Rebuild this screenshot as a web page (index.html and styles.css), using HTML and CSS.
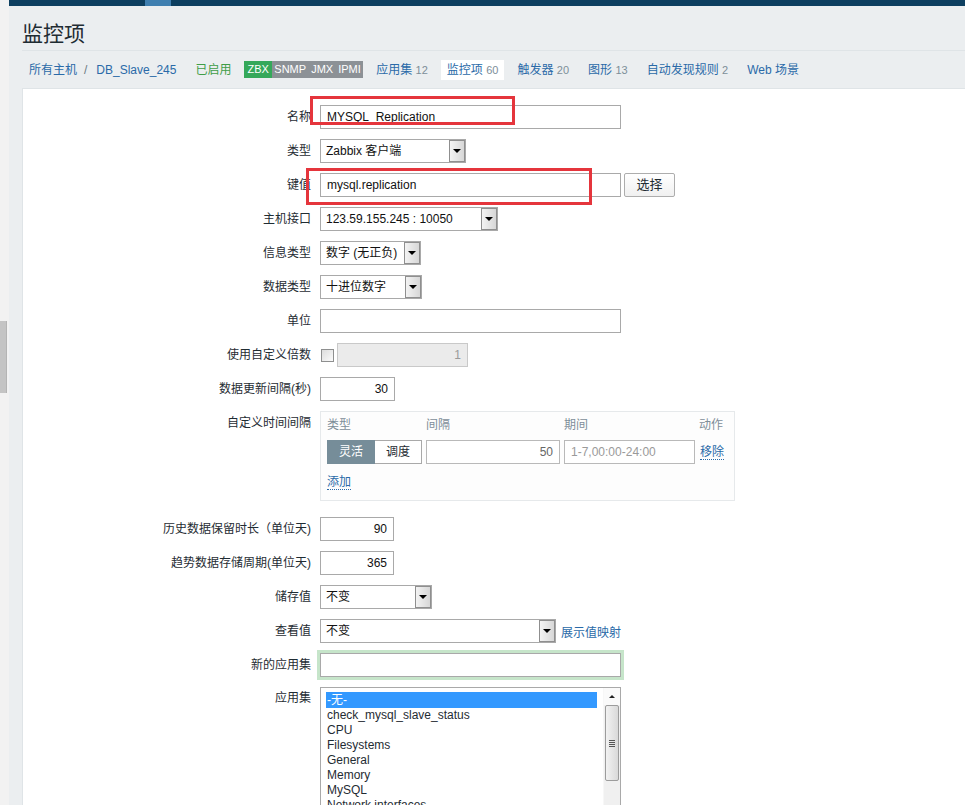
FILE: index.html
```html
<!DOCTYPE html>
<html lang="zh-CN">
<head>
<meta charset="utf-8">
<title>监控项</title>
<link rel="stylesheet" href="styles.css">
</head>
<body>
<div class="page">
  <div class="vscroll"><div class="vthumb"></div></div>
  <div class="main">
    <div class="topnav"><span class="topnav-active"></span></div>
    <header class="hdr">
      <h1 class="title">监控项</h1>
      <ul class="hostnav">
        <li><a class="lnk">所有主机</a><span class="sep">/</span><a class="lnk">DB_Slave_245</a></li>
        <li class="ok">已启用</li>
        <li class="tags"><span class="tag tag-on">ZBX</span><span class="tag">SNMP</span><span class="tag">JMX</span><span class="tag">IPMI</span></li>
        <li><a class="lnk">应用集</a> <span class="cnt">12</span></li>
        <li class="cur"><a class="lnk">监控项</a> <span class="cnt">60</span></li>
        <li><a class="lnk">触发器</a> <span class="cnt">20</span></li>
        <li><a class="lnk">图形</a> <span class="cnt">13</span></li>
        <li><a class="lnk">自动发现规则</a> <span class="cnt">2</span></li>
        <li><a class="lnk">Web 场景</a></li>
      </ul>
    </header>
    <div class="form">
      <div class="grid">
        <div class="lbl">名称</div>
        <div class="fld"><div class="inp w301">MYSQL_Replication</div></div>

        <div class="lbl">类型</div>
        <div class="fld"><div class="sel w146"><span class="sel-txt">Zabbix 客户端</span><span class="sel-btn"></span></div></div>

        <div class="lbl">键值</div>
        <div class="fld"><div class="inp w301">mysql.replication</div><div class="btn">选择</div></div>

        <div class="lbl">主机接口</div>
        <div class="fld"><div class="sel w178"><span class="sel-txt">123.59.155.245 : 10050</span><span class="sel-btn"></span></div></div>

        <div class="lbl">信息类型</div>
        <div class="fld"><div class="sel w101"><span class="sel-txt">数字 (无正负)</span><span class="sel-btn"></span></div></div>

        <div class="lbl">数据类型</div>
        <div class="fld"><div class="sel w102"><span class="sel-txt">十进位数字</span><span class="sel-btn"></span></div></div>

        <div class="lbl">单位</div>
        <div class="fld"><div class="inp w301"></div></div>

        <div class="lbl">使用自定义倍数</div>
        <div class="fld"><span class="chk"></span><div class="inp inp-dis w131 num">1</div></div>

        <div class="lbl">数据更新间隔(秒)</div>
        <div class="fld"><div class="inp w75 num">30</div></div>

        <div class="lbl lbl-top">自定义时间间隔</div>
        <div class="fld fld-ci">
          <div class="ci">
            <div class="ci-row ci-head"><span>类型</span><span>间隔</span><span>期间</span><span>动作</span></div>
            <div class="ci-row ci-body">
              <div class="tgl"><span class="tg tg-on">灵活</span><span class="tg">调度</span></div>
              <div class="inp ci-inp num">50</div>
              <div class="inp ci-inp ph">1-7,00:00-24:00</div>
              <a class="lnk dot">移除</a>
            </div>
            <div class="ci-add"><a class="lnk dot">添加</a></div>
          </div>
        </div>

        <div class="lbl">历史数据保留时长（单位天)</div>
        <div class="fld"><div class="inp w74 num">90</div></div>

        <div class="lbl">趋势数据存储周期(单位天)</div>
        <div class="fld"><div class="inp w74 num">365</div></div>

        <div class="lbl">储存值</div>
        <div class="fld"><div class="sel w112"><span class="sel-txt">不变</span><span class="sel-btn"></span></div></div>

        <div class="lbl">查看值</div>
        <div class="fld"><div class="sel w236"><span class="sel-txt">不变</span><span class="sel-btn"></span></div><a class="lnk map">展示值映射</a></div>

        <div class="lbl">新的应用集</div>
        <div class="fld"><div class="inp w301 focus"></div></div>

        <div class="lbl lbl-top2">应用集</div>
        <div class="fld fld-top">
          <div class="lb">
            <div class="lb-opts">
              <div class="opt opt-sel">-无-</div>
              <div class="opt">check_mysql_slave_status</div>
              <div class="opt">CPU</div>
              <div class="opt">Filesystems</div>
              <div class="opt">General</div>
              <div class="opt">Memory</div>
              <div class="opt">MySQL</div>
              <div class="opt">Network interfaces</div>
            </div>
            <div class="lb-sb">
              <div class="sb-up"></div>
              <div class="sb-thumb"><span class="grip"></span></div>
            </div>
          </div>
        </div>
      </div>
    </div>
  </div>
</div>
<div class="mark mark-name"></div>
<div class="mark mark-key"></div>
</body>
</html>
```

FILE: styles.css
```css
html, body {
  margin: 0;
  padding: 0;
  height: 100%;
  overflow: hidden;
}
body {
  font-family: "Liberation Sans", "Noto Sans CJK SC", sans-serif;
  font-size: 12px;
  color: #1f2c33;
  background: #ebeef0;
}
.page {
  display: flex;
  height: 100vh;
}
.vscroll {
  flex: none;
  width: 9px;
  background: #f2f2f2;
}
.vthumb {
  margin-top: 321px;
  width: 6px;
  height: 72px;
  background: #c4c4c4;
  border-right: 1px solid #b4b4b4;
}
.main {
  flex: 1;
  min-width: 0;
  display: flex;
  flex-direction: column;
}
.topnav {
  flex: none;
  height: 6px;
  background: #0d3f60;
}
.topnav-active {
  display: block;
  margin-left: 136px;
  width: 26px;
  height: 6px;
  background: #3f7fb0;
}
.hdr {
  padding-left: 13px;
}
.title {
  margin: 14px 0 6px;
  font-family: "Noto Sans CJK SC", sans-serif;
  font-size: 21px;
  line-height: 24px;
  font-weight: normal;
  color: #1f2c33;
}
.hostnav {
  list-style: none;
  margin: 0;
  padding: 0 0 0 1px;
  height: 37px;
  border-top: 1px solid #dfe4e7;
  display: flex;
  align-items: center;
  gap: 7px;
  white-space: nowrap;
}
.hostnav li {
  padding: 0 6px;
  line-height: 20px;
}
.hostnav li.tags {
  padding: 0;
  display: flex;
}
.hostnav li.cur {
  background: #fff;
}
.lnk {
  color: #2a6aa8;
  text-decoration: none;
}
.sep {
  color: #6c7a83;
  margin: 0 9px 0 7px;
}
.ok {
  color: #3f9d47;
}
.cnt {
  color: #7d8e99;
  font-size: 11px;
}
.tag {
  display: block;
  height: 17px;
  line-height: 17px;
  padding: 0 2.5px;
  font-size: 11px;
  color: #fff;
  background: #8c9196;
}
.tag-on {
  padding: 0 3px;
  background: #35a85a;
}
.form {
  flex: 1;
  margin-left: 13px;
  border-left: 1px solid #dfe4e7;
  border-top: 1px solid #dfe4e7;
  background: #fff;
  padding-top: 16px;
}
.grid {
  display: grid;
  grid-template-columns: 288px 1fr;
  column-gap: 9px;
  row-gap: 10px;
}
.lbl {
  text-align: right;
  align-self: center;
  line-height: 16px;
  white-space: nowrap;
}
.lbl-top {
  align-self: start;
  padding-top: 4px;
}
.lbl-top2 {
  align-self: start;
  padding-top: 3px;
}
.fld {
  display: flex;
  align-items: center;
  gap: 3px;
}
.fld-ci {
  margin-bottom: 6px;
}
.fld-top {
  align-items: flex-start;
}
.inp {
  box-sizing: border-box;
  height: 24px;
  line-height: 22px;
  border: 1px solid #a9a9a9;
  padding: 0 6px;
  background: #fff;
  color: #111;
  white-space: nowrap;
  overflow: hidden;
}
.num {
  text-align: right;
}
.w301 { width: 301px; }
.w146 { width: 146px; }
.w178 { width: 178px; }
.w101 { width: 101px; }
.w102 { width: 102px; }
.w131 { width: 131px; }
.w75 { width: 75px; }
.w74 { width: 74px; }
.w112 { width: 112px; }
.w236 { width: 236px; }
.inp-dis {
  background: #ebebeb;
  border-color: #c9c9c9;
  color: #9a9a9a;
}
.focus {
  box-shadow: 0 0 0 3px #c6e5ca;
}
.btn {
  box-sizing: border-box;
  width: 51px;
  height: 24px;
  line-height: 22px;
  text-align: center;
  font-size: 13px;
  border: 1px solid #adadad;
  border-radius: 2px;
  background: linear-gradient(#ffffff, #f0f0f0);
  color: #1f2c33;
}
.chk {
  box-sizing: border-box;
  width: 13px;
  height: 13px;
  margin-left: 1px;
  border: 1px solid #8e8f8f;
  background: linear-gradient(135deg, #dcdcdc, #fbfbfb);
}
.sel {
  box-sizing: border-box;
  height: 24px;
  border: 1px solid #a9a9a9;
  display: flex;
  background: #fff;
}
.sel-txt {
  flex: 1;
  padding-left: 5px;
  line-height: 22px;
  color: #111;
  white-space: nowrap;
  overflow: hidden;
}
.sel-btn {
  flex: none;
  box-sizing: border-box;
  width: 16px;
  height: 22px;
  border: 1px solid #8f8f8f;
  background: linear-gradient(90deg, #f3f3f3, #d7d7d7);
  display: flex;
  align-items: center;
  justify-content: center;
}
.sel-btn::after {
  content: "";
  width: 0;
  height: 0;
  border-left: 4px solid transparent;
  border-right: 4px solid transparent;
  border-top: 4px solid #000;
}
.map {
  margin-left: 2px;
}
.ci {
  box-sizing: border-box;
  width: 415px;
  border: 1px solid #e6e9eb;
  background: #fdfdfd;
  padding: 5px 0 10px 6px;
}
.ci-row {
  display: grid;
  grid-template-columns: 95px 134px 131px auto;
  column-gap: 4px;
  align-items: center;
}
.ci-head {
  color: #7d8e99;
  line-height: 16px;
}
.ci-body {
  margin-top: 7px;
}
.tgl {
  display: flex;
  height: 24px;
}
.tg {
  box-sizing: border-box;
  width: 47px;
  height: 24px;
  line-height: 22px;
  text-align: center;
  border: 1px solid #a9a9a9;
  border-left: none;
  background: #fff;
  color: #1f2c33;
}
.tg-on {
  width: 48px;
  border: 1px solid #768d99;
  background: #768d99;
  color: #fff;
}
.ci-inp {
  width: 100%;
  border-color: #b9b9b9;
  color: #666;
}
.ph {
  color: #9a9a9a;
}
.dot {
  border-bottom: 1px dotted #2a6aa8;
  line-height: 14px;
  justify-self: start;
  margin-left: 1px;
}
.ci-add {
  margin-top: 10px;
  line-height: 16px;
}
.ci-add .dot {
  margin-left: 0;
}
.lb {
  box-sizing: border-box;
  width: 301px;
  height: 150px;
  border: 1px solid #a9a9a9;
  display: flex;
  overflow: hidden;
}
.lb-opts {
  flex: 1;
  padding: 4px 6px 0 5px;
}
.opt {
  height: 15px;
  line-height: 15px;
  padding-left: 1px;
  color: #1f2c33;
  white-space: nowrap;
}
.opt-sel {
  height: 16px;
  line-height: 16px;
  background: #3399ff;
  color: #fff;
}
.lb-sb {
  flex: none;
  width: 16px;
  display: flex;
  flex-direction: column;
  background: #f0f0f0;
  border-left: 1px solid #f7f7f7;
}
.sb-up {
  height: 17px;
  background: #fafafa;
  display: flex;
  align-items: center;
  justify-content: center;
}
.sb-up::after {
  content: "";
  width: 0;
  height: 0;
  border-left: 3px solid transparent;
  border-right: 3px solid transparent;
  border-bottom: 3px solid #222;
}
.sb-thumb {
  box-sizing: border-box;
  height: 76px;
  margin: 0 1px;
  border: 1px solid #9c9c9c;
  border-radius: 2px;
  background: linear-gradient(90deg, #f2f2f2, #d9d9d9);
  display: flex;
  align-items: center;
  justify-content: center;
}
.grip {
  width: 6px;
  height: 7px;
  background: repeating-linear-gradient(#555 0 1px, transparent 1px 2px);
}
.mark {
  position: absolute;
  box-sizing: border-box;
  border: 3px solid #e5353c;
}
.mark-name {
  left: 310px;
  top: 96px;
  width: 205px;
  height: 29px;
}
.mark-key {
  left: 306px;
  top: 168px;
  width: 286px;
  height: 37px;
}
```
